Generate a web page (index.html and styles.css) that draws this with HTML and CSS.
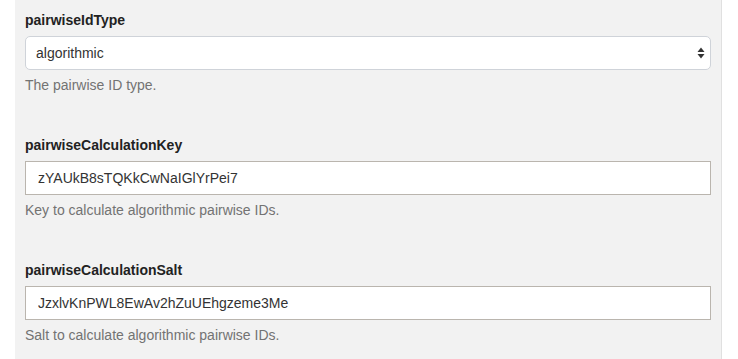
FILE: index.html
```html
<!DOCTYPE html>
<html lang="en">
  <head>
    <meta charset="UTF-8" />
    <title>Pairwise settings</title>
    <link rel="stylesheet" href="styles.css">
  </head>
  <body>
    <div class="panel">
      <div class="field">
        <label for="pairwiseIdType">pairwiseIdType</label>
        <div class="select-wrap">
          <select id="pairwiseIdType">
            <option>algorithmic</option>
            <option>persistent</option>
          </select>
          <svg class="select-arrows" width="8" height="12" viewBox="0 0 8 12">
            <path d="M4 0.5 L7.5 5 L0.5 5 Z" fill="#333" />
            <path d="M4 11.5 L7.5 7 L0.5 7 Z" fill="#333" />
          </svg>
        </div>
        <p class="help">The pairwise ID type.</p>
      </div>

      <div class="field">
        <label for="pairwiseCalculationKey">pairwiseCalculationKey</label>
        <input type="text" id="pairwiseCalculationKey" value="zYAUkB8sTQKkCwNaIGlYrPei7" />
        <p class="help">Key to calculate algorithmic pairwise IDs.</p>
      </div>

      <div class="field">
        <label for="pairwiseCalculationSalt">pairwiseCalculationSalt</label>
        <input type="text" id="pairwiseCalculationSalt" value="JzxlvKnPWL8EwAv2hZuUEhgzeme3Me" />
        <p class="help">Salt to calculate algorithmic pairwise IDs.</p>
      </div>
    </div>
  </body>
</html>
```

FILE: styles.css
```css
body {
  font-family: "Liberation Sans", Arial, sans-serif;
  background-color: #fff;
  margin: 0;
  padding: 0;
  color: #333;
}
.panel {
  width: 686px;
  min-height: 359px;
  margin-left: 15px;
  padding: 11px 10px 0 10px;
  background-color: #f2f2f2;
  border-right: 1px solid #e0e0e0;
  box-sizing: content-box;
}
.field {
  margin-bottom: 42px;
}
label {
  display: block;
  font-size: 14px;
  font-weight: bold;
  line-height: 18px;
  color: #222;
  margin-bottom: 7px;
}
.select-wrap {
  position: relative;
}
select,
input[type="text"] {
  display: block;
  width: 100%;
  height: 34px;
  box-sizing: border-box;
  font-family: "Liberation Sans", Arial, sans-serif;
  font-size: 14px;
  color: #333;
  background-color: #fff;
  margin: 0;
}
select {
  appearance: none;
  -webkit-appearance: none;
  border: 1px solid #cfd3d9;
  border-radius: 5px;
  padding: 0 24px 0 10px;
}
.select-arrows {
  position: absolute;
  right: 6px;
  top: 11px;
}
input[type="text"] {
  border: 1px solid #bab5ae;
  border-radius: 0;
  padding: 0 12px;
}
.help {
  margin: 6px 0 0 0;
  font-size: 14px;
  line-height: 18px;
  color: #737373;
}
```
